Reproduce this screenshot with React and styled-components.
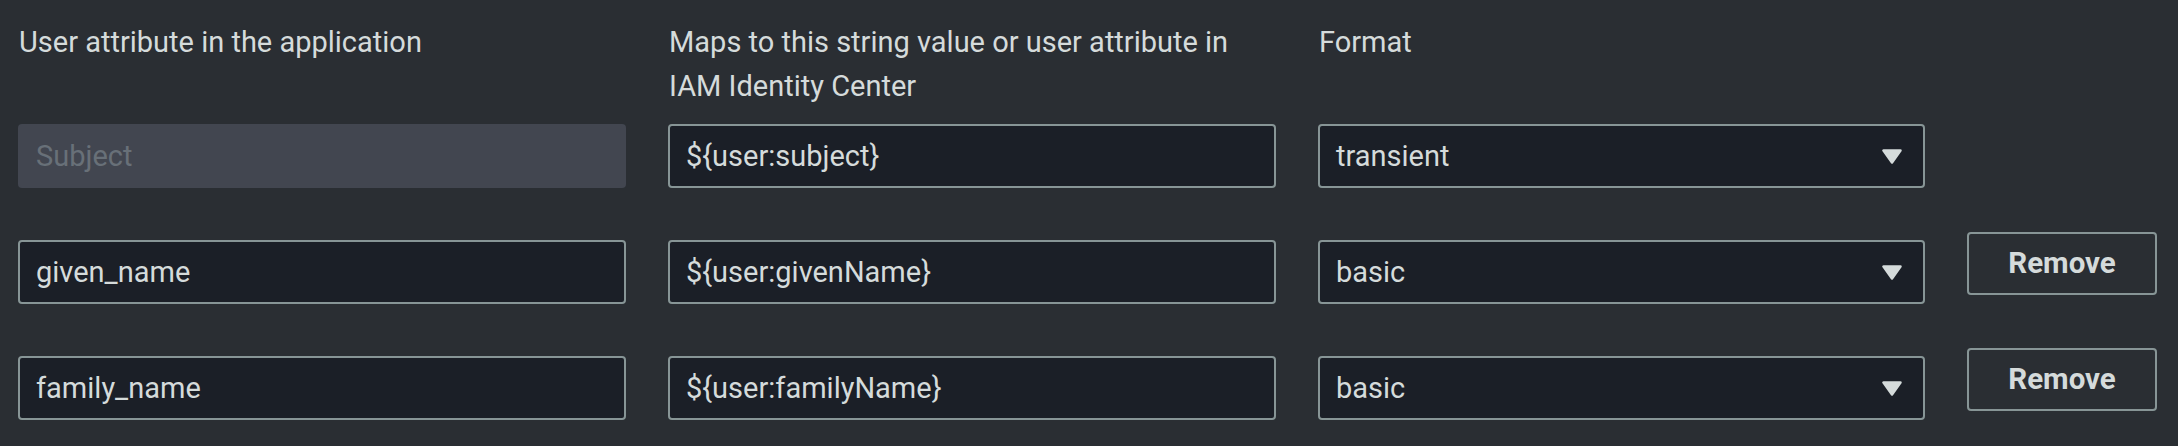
import React from "react";
import styled, { createGlobalStyle } from "styled-components";

const GlobalStyle = createGlobalStyle`
  html, body {
    margin: 0;
    padding: 0;
    background: #2a2e33;
  }
  body {
    font-family: Roboto, "Open Sans", "Liberation Sans", sans-serif;
  }
`;

const COLS = "608px 608px 607px 190px";

const Page = styled.div`
  box-sizing: border-box;
  width: 2178px;
  min-height: 446px;
  padding: 20px 21px 0 18px;
  background: #2a2e33;
  color: #d5dbdb;
  font-family: Roboto, "Open Sans", "Liberation Sans", sans-serif;
  font-size: 29px;
  line-height: 44px;
`;

const Header = styled.div`
  display: grid;
  grid-template-columns: ${COLS};
  column-gap: 42px;
  align-items: start;
  margin-bottom: 16px;
`;

const Label = styled.div`
  padding-left: 1px;
  color: #d5dbdb;
  font-weight: 400;
`;

const Rows = styled.div`
  display: flex;
  flex-direction: column;
  gap: 52px;
`;

const Row = styled.div`
  display: grid;
  grid-template-columns: ${COLS};
  column-gap: 42px;
  align-items: start;
`;

const Field = styled.div`
  box-sizing: border-box;
  height: 64px;
  display: flex;
  align-items: center;
  padding: 0 21px 0 16px;
  border: 2px solid ${(p) => (p.$disabled ? "transparent" : "#879596")};
  border-radius: 4px;
  background: ${(p) => (p.$disabled ? "#424650" : "#1b1f27")};
  color: ${(p) => (p.$disabled ? "#687078" : "#d5dbdb")};
  white-space: nowrap;
`;

const Value = styled.span`
  flex: 1;
`;

const Caret = styled.svg`
  flex: none;
  width: 20px;
  height: 15px;
`;

const RemoveButton = styled.button`
  box-sizing: border-box;
  height: 63px;
  margin-top: -8px;
  border: 2px solid #879596;
  border-radius: 4px;
  background: transparent;
  color: #d5dbdb;
  font-family: inherit;
  font-size: 29.5px;
  font-weight: 700;
  line-height: 1;
  cursor: pointer;
`;

const SelectField = ({ value }) => (
  <Field>
    <Value>{value}</Value>
    <Caret viewBox="0 0 20 15">
      <polygon
        points="1.5,1.5 18.5,1.5 10,13.5"
        fill="#d5dbdb"
        stroke="#d5dbdb"
        strokeWidth="2.5"
        strokeLinejoin="round"
      />
    </Caret>
  </Field>
);

const rows = [
  { app: "Subject", disabled: true, map: "${user:subject}", format: "transient", removable: false },
  { app: "given_name", map: "${user:givenName}", format: "basic", removable: true },
  { app: "family_name", map: "${user:familyName}", format: "basic", removable: true },
];

export default function App() {
  return (
    <>
      <GlobalStyle />
      <Page>
        <Header>
          <Label>User attribute in the application</Label>
          <Label>
            Maps to this string value or user attribute in
            <br />
            IAM Identity Center
          </Label>
          <Label>Format</Label>
          <div />
        </Header>
        <Rows>
          {rows.map((r) => (
            <Row key={r.app}>
              <Field $disabled={r.disabled}>
                <Value>{r.app}</Value>
              </Field>
              <Field>
                <Value>{r.map}</Value>
              </Field>
              <SelectField value={r.format} />
              {r.removable ? <RemoveButton type="button">Remove</RemoveButton> : <div />}
            </Row>
          ))}
        </Rows>
      </Page>
    </>
  );
}
